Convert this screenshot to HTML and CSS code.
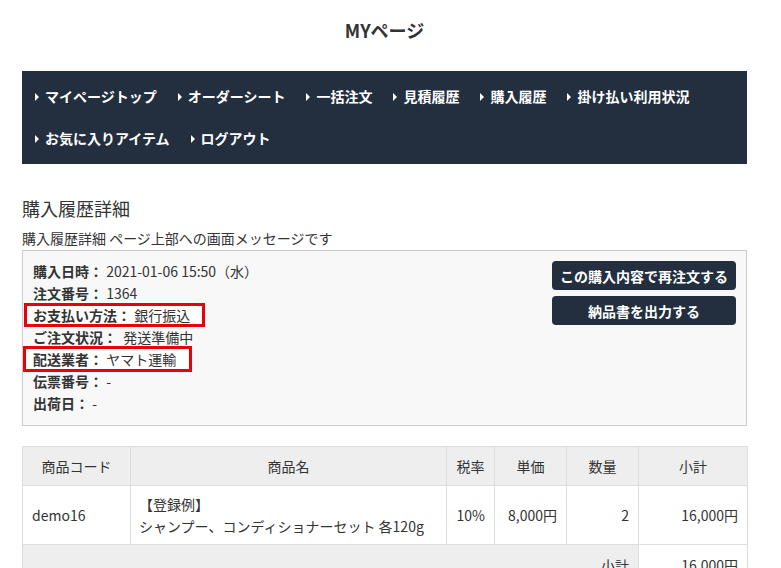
FILE: index.html
```html
<!DOCTYPE html>
<html lang="ja">
<head>
<meta charset="utf-8">
<title>MYページ</title>
<link rel="stylesheet" href="styles.css">
</head>
<body>
<div class="page">
  <h1 class="title">MYページ</h1>
  <nav class="gnav">
    <ul class="gnav-list">
      <li class="gnav-item">マイページトップ</li>
      <li class="gnav-item">オーダーシート</li>
      <li class="gnav-item">一括注文</li>
      <li class="gnav-item">見積履歴</li>
      <li class="gnav-item">購入履歴</li>
      <li class="gnav-item">掛け払い利用状況</li>
      <li class="gnav-item">お気に入りアイテム</li>
      <li class="gnav-item">ログアウト</li>
    </ul>
  </nav>
  <h2 class="heading">購入履歴詳細</h2>
  <p class="msg">購入履歴詳細 ページ上部への画面メッセージです</p>
  <div class="info">
    <ul class="info-list">
      <li class="info-row"><span class="lbl">購入日時：</span> 2021-01-06 15:50（水）</li>
      <li class="info-row"><span class="lbl">注文番号：</span> 1364</li>
      <li class="info-row"><span class="mark mark-a"><span class="lbl">お支払い方法：</span> 銀行振込</span></li>
      <li class="info-row"><span class="lbl">ご注文状況：</span>&nbsp; 発送準備中</li>
      <li class="info-row"><span class="mark mark-b"><span class="lbl">配送業者：</span> ヤマト運輸</span></li>
      <li class="info-row"><span class="lbl">伝票番号：</span> -</li>
      <li class="info-row"><span class="lbl">出荷日：</span> -</li>
    </ul>
    <div class="actions">
      <button class="btn">この購入内容で再注文する</button>
      <button class="btn">納品書を出力する</button>
    </div>
  </div>
  <table class="items">
    <colgroup>
      <col class="c-code"><col class="c-name"><col class="c-tax"><col class="c-price"><col class="c-qty"><col class="c-sub">
    </colgroup>
    <thead>
      <tr><th>商品コード</th><th>商品名</th><th>税率</th><th>単価</th><th>数量</th><th>小計</th></tr>
    </thead>
    <tbody>
      <tr>
        <td>demo16</td>
        <td class="name">【登録例】<br>シャンプー、コンディショナーセット 各120g</td>
        <td class="num">10%</td>
        <td class="num">8,000円</td>
        <td class="num">2</td>
        <td class="num">16,000円</td>
      </tr>
    </tbody>
    <tfoot>
      <tr><td colspan="5" class="num sum-lbl">小計</td><td class="num sum-val">16,000円</td></tr>
    </tfoot>
  </table>
</div>
</body>
</html>
```
FILE: styles.css
```css
html, body {
  margin: 0;
  padding: 0;
  background: #fff;
}
body {
  font-family: "Noto Sans CJK JP", "Noto Sans", sans-serif;
  font-size: 14px;
  color: #333;
}
.page {
  width: 725px;
  margin-left: 22px;
}
.title {
  margin: 0;
  padding-top: 18px;
  font-size: 18px;
  line-height: 24px;
  font-weight: bold;
  text-align: center;
  color: #333;
  margin-bottom: 29px;
}
.gnav {
  background: #232f3f;
  padding: 4px 13px 5px;
}
.gnav-list {
  list-style: none;
  margin: 0;
  padding: 0;
  display: flex;
  flex-wrap: wrap;
  column-gap: 21px;
}
.gnav-item {
  display: flex;
  align-items: center;
  height: 42px;
  color: #fff;
  font-weight: bold;
  font-size: 14px;
}
.gnav-item::before {
  content: "";
  display: block;
  width: 0;
  height: 0;
  border-left: 4px solid #fff;
  border-top: 4px solid transparent;
  border-bottom: 4px solid transparent;
  margin-right: 6px;
  margin-top: 1px;
}
.heading {
  margin: 31px 0 0;
  font-size: 18px;
  line-height: 26px;
  font-weight: normal;
  color: #333;
}
.msg {
  margin: 7px 0 2px;
  font-size: 14px;
  line-height: 20px;
}
.info {
  display: flex;
  justify-content: space-between;
  align-items: flex-start;
  background: #f8f8f8;
  border: 1px solid #ccc;
  padding: 9px 10px 11px;
}
.info-list {
  list-style: none;
  margin: 0;
  padding: 0;
}
.info-row {
  line-height: 22px;
  height: 22px;
}
.lbl {
  font-weight: bold;
}
.mark {
  display: inline-block;
  vertical-align: top;
  margin-top: 2px;
  outline: 3px solid #e8000b;
  line-height: 18px;
  padding: 0 12px 0 6px;
  margin-left: -6px;
  background: #fff;
}
.mark-a {
  outline-offset: 0;
}
.mark-b {
  outline-offset: 1px;
}
.actions {
  display: flex;
  flex-direction: column;
  gap: 6px;
  width: 184px;
  padding-top: 1px;
}
.btn {
  font-family: inherit;
  font-size: 14px;
  font-weight: bold;
  color: #fff;
  background: #232f3f;
  border: 0;
  border-radius: 4px;
  height: 29px;
  padding: 0;
}
.items {
  width: 100%;
  margin-top: 20px;
  border-collapse: collapse;
  table-layout: fixed;
}
.c-code { width: 108px; }
.c-name { width: 316px; }
.c-tax { width: 48px; }
.c-price { width: 72px; }
.c-qty { width: 72px; }
.c-sub { width: 109px; }
.items th, .items td {
  border: 1px solid #ddd;
  padding: 0 9px;
  font-size: 14px;
}
.items th {
  background: #eee;
  font-weight: normal;
  height: 38px;
  text-align: center;
}
.items tbody td {
  height: 58px;
  line-height: 22px;
}
.items td.name {
  padding-left: 8px;
}
.items td.num {
  text-align: right;
}
.items tfoot td {
  height: 40px;
}
.sum-lbl {
  background: #eee;
}
.sum-val {
  background: #fff;
}
```
